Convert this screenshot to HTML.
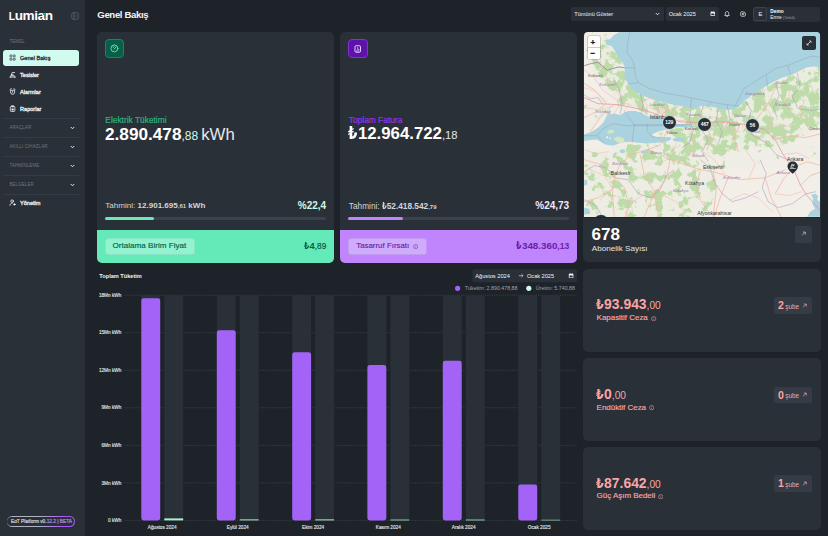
<!DOCTYPE html>
<html lang="tr">
<head>
<meta charset="utf-8">
<title>Genel Bakış</title>
<style>
*{box-sizing:border-box;margin:0;padding:0}
html,body{width:828px;height:536px;overflow:hidden;background:#1e2329;font-family:"Liberation Sans","DejaVu Sans",sans-serif;color:#f3f4f6}
.abs{position:absolute}
#side{position:absolute;left:0;top:0;width:85px;height:536px;background:#2a3038}
.nav{position:absolute;left:3px;width:76px;height:16px;border-radius:3px;font-size:5.6px;font-weight:400;-webkit-text-stroke:.28px currentColor;color:#f3f4f6;line-height:16px;padding-left:17px;white-space:nowrap}
.nav svg{position:absolute;left:6.400px;top:4.300px;width:7.200px;height:7.200px}
.nav.act{background:#d0fbee;color:#1f2937}
.sec{position:absolute;left:9.400px;font-size:4.500px;color:#6b7480;letter-spacing:.08px;font-weight:400;white-space:nowrap}
.div{position:absolute;left:3px;width:76px;height:1px;background:#353c45}
.chev{position:absolute;left:70px;width:5px;height:4px;margin-top:.5px}
.card{position:absolute;background:#2a3038;border-radius:5px;overflow:hidden}
.t{position:absolute;white-space:nowrap;line-height:1}
.mk{position:absolute;width:13.200px;height:13.200px;border-radius:50%;background:#2a3038;box-shadow:0 0 0 .7px rgba(190,215,235,.9);color:#fff;font-size:4.900px;font-weight:700;text-align:center;line-height:13.400px;letter-spacing:-.15px}
.l{display:inline-block;transform:scaleX(.8);transform-origin:0 50%;margin-right:-.135em}
</style>
</head>
<body>
<div id="side">
  <!-- logo -->
  <div class="t" id="logo" style="left:8.8px;top:9.2px;font-size:13.6px;font-weight:700;color:#fff;letter-spacing:-.45px"><span style="font-size:10.2px;letter-spacing:-.3px">L</span>umian</div>
  <div class="abs" style="left:42.6px;top:13.2px;width:2.4px;height:1.5px;background:#10b981"></div>
  <svg class="abs" style="left:71px;top:12px" width="8" height="8" viewBox="0 0 16 16" fill="none" stroke="#5b6470" stroke-width="1.6"><rect x="1.5" y="1.5" width="13" height="13" rx="3"/><path d="M6 1.5v13M10.5 6.5l-2 1.5 2 1.5" /></svg>

  <div class="sec" style="top:39.3px">TEMEL</div>
  <div class="nav act" style="top:49.6px"><svg viewBox="0 0 16 16" fill="none" stroke="#374151" stroke-width="1.900"><rect x="2.200" y="2.200" width="4.300" height="4.300" rx="1.200"/><rect x="9.500" y="2.200" width="4.300" height="4.300" rx="1.200"/><rect x="2.200" y="9.500" width="4.300" height="4.300" rx="1.200"/><rect x="9.500" y="9.500" width="4.300" height="4.300" rx="1.200"/></svg>Genel Bakış</div>
  <div class="nav" style="top:66.5px"><svg viewBox="0 0 16 16" fill="none" stroke="#f3f4f6" stroke-width="1.800" stroke-linecap="round" stroke-linejoin="round"><path d="M2 13.500h12.500M3.500 13.500L7 3.500h5.500M6 7.500c3.500 0 6 2 6.500 6M4.800 10.500h4"/></svg>Tesisler</div>
  <div class="nav" style="top:83.5px"><svg viewBox="0 0 16 16" fill="none" stroke="#f3f4f6" stroke-width="1.800" stroke-linecap="round" stroke-linejoin="round"><path d="M3.500 5h9v4.500a4.500 4.500 0 0 1-9 0zM2.500 3l2.500-1.500M13.500 3L11 1.500M8 7v2.500"/></svg>Alarmlar</div>
  <div class="nav" style="top:100.5px"><svg viewBox="0 0 16 16" fill="none" stroke="#f3f4f6" stroke-width="1.800" stroke-linejoin="round"><rect x="3" y="3" width="10" height="11.500" rx="2.200"/><path d="M6 1.800h4v2.400H6z"/><rect x="5.500" y="8" width="5" height="4" rx=".8" fill="#f3f4f6" stroke="none"/></svg>Raporlar</div>

  <div class="div" style="top:117.5px"></div>
  <div class="sec" style="top:125.3px">ARAÇLAR</div>
  <svg class="chev" style="top:125px" viewBox="0 0 10 8" fill="none" stroke="#e5e7eb" stroke-width="2"><path d="M1.500 2l3.500 3.500L8.500 2"/></svg>
  <div class="div" style="top:136.5px"></div>
  <div class="sec" style="top:144.3px">AKILLI CİHAZLAR</div>
  <svg class="chev" style="top:144px" viewBox="0 0 10 8" fill="none" stroke="#e5e7eb" stroke-width="2"><path d="M1.500 2l3.500 3.500L8.500 2"/></svg>
  <div class="div" style="top:155.5px"></div>
  <div class="sec" style="top:163.3px">TAHMİNLEME</div>
  <svg class="chev" style="top:163px" viewBox="0 0 10 8" fill="none" stroke="#e5e7eb" stroke-width="2"><path d="M1.500 2l3.500 3.500L8.500 2"/></svg>
  <div class="div" style="top:174.5px"></div>
  <div class="sec" style="top:182.3px">BELGELER</div>
  <svg class="chev" style="top:182px" viewBox="0 0 10 8" fill="none" stroke="#e5e7eb" stroke-width="2"><path d="M1.500 2l3.500 3.500L8.500 2"/></svg>
  <div class="div" style="top:193.500px"></div>
  <div class="nav" style="top:195px"><svg viewBox="0 0 16 16" fill="none" stroke="#f3f4f6" stroke-width="1.800" stroke-linecap="round"><circle cx="7" cy="4.800" r="2.900"/><path d="M2.200 14c0-3 2-5 5-5"/><circle cx="12" cy="12" r="1.600" fill="#f3f4f6"/></svg>Yönetim</div>

  <div class="abs" style="left:6.700px;top:516.100px;width:68.200px;height:10.600px;border-radius:5.300px;background:linear-gradient(90deg,#aeb4bd 0%,#aeb4bd 45%,#a855f7 85%)"></div>
  <div class="abs" style="left:7.400px;top:516.800px;width:66.800px;height:9.200px;border-radius:4.600px;background:#2a3038;font-size:4.800px;font-weight:400;-webkit-text-stroke:.2px currentColor;line-height:9.300px;padding-left:3.600px;white-space:nowrap;color:#d1d5db">EoT Platform v0.<span style="color:#a78bfa">12.2 | BETA</span></div>
</div>

<!-- header -->
<div class="t" style="left:97.300px;top:9.600px;font-size:9.600px;font-weight:700;color:#f3f4f6;letter-spacing:-.36px">Genel Bakış</div>


<!-- header controls -->
<div class="abs" style="left:571px;top:7.4px;width:93px;height:14px;background:#2a3038;border-radius:2px"></div>
<div class="t" style="left:574.3px;top:11.6px;font-size:5.6px;color:#f3f4f6">Tümünü Göster</div>
<svg class="abs" style="left:654.5px;top:12.3px" width="5" height="4" viewBox="0 0 10 8" fill="none" stroke="#e5e7eb" stroke-width="1.8"><path d="M1.5 2l3.500 3.500L8.500 2"/></svg>
<div class="abs" style="left:665.7px;top:7.4px;width:53.2px;height:14px;background:#2a3038;border-radius:2px"></div>
<div class="t" style="left:668.7px;top:11.6px;font-size:5.6px;color:#f3f4f6">Ocak 2025</div>
<svg class="abs" style="left:709.8px;top:11.4px" width="5.600" height="5.600" viewBox="0 0 16 16"><rect x="1.500" y="2.500" width="13" height="12" rx="2.500" fill="#f3f4f6"/><rect x="3.500" y="7" width="9" height="5.500" rx="1" fill="#2a3038"/><path d="M5 1v3M11 1v3" stroke="#f3f4f6" stroke-width="2"/></svg>
<svg class="abs" style="left:724.4px;top:11px" width="6" height="6.400" viewBox="0 0 16 17" fill="none" stroke="#f3f4f6" stroke-width="1.900"><path d="M8 1.500c-2.800 0-4.500 2-4.500 4.500v3L2 12h12l-1.500-3V6c0-2.500-1.700-4.500-4.500-4.500zM6 14.500c.5 1 3.500 1 4 0"/></svg>
<svg class="abs" style="left:739.7px;top:11.2px" width="6" height="6" viewBox="0 0 16 16" fill="none" stroke="#f3f4f6" stroke-width="1.900"><circle cx="8" cy="8" r="2.300"/><path d="M8 1.500l1.600 1.300 2.100-.3.800 1.900 1.900.900-.3 2.100L15.400 8l-1.300 1.600.3 2.100-1.900.8-.9 1.900-2.100-.3L8 15.400l-1.600-1.300-2.100.3-.8-1.900-1.900-.9.300-2.100L.6 8l1.300-1.600-.3-2.100 1.900-.8.900-1.900 2.100.3z"/></svg>
<div class="abs" style="left:753px;top:6.900px;width:67px;height:14.700px;background:#2a3038;border-radius:2.500px"></div>
<div class="abs" style="left:753.3px;top:7.200px;width:14px;height:14.100px;background:#2a3038;border:0.700px solid #3b434d;border-radius:2.500px"></div>
<div class="t" style="left:758.6px;top:11.500px;font-size:5.800px;color:#f3f4f6">E</div>
<div class="t" style="left:770.3px;top:9.600px;font-size:4.800px;font-weight:700;color:#fff">Demo</div>
<div class="t" style="left:770.3px;top:15.900px;font-size:4.800px;color:#f3f4f6">Emre <span style="font-size:3.600px;color:#9ca3af">(Yetkili)</span></div>

<!-- card 1 -->
<div class="card" style="left:97px;top:31.500px;width:237.200px;height:231px">
  <div class="abs" style="left:8.050px;top:7.300px;width:19.300px;height:19.300px;background:#065f46;border:0.700px solid #0f8a65;border-radius:4px"></div>
  <svg class="abs" style="left:13.400px;top:12.900px" width="8.800" height="8.800" viewBox="0 0 16 16" fill="none" stroke="#6ee7b7" stroke-width="1.600" stroke-linecap="round"><circle cx="8" cy="8" r="6.300"/><path d="M7.500 9.500l3.300-4M4.800 5.200l1 1M7.200 3.800l.3 1"/></svg>
  <div class="t" style="left:8.300px;top:84.600px;font-size:8.400px;-webkit-text-stroke:.2px #2fb07f;color:#2fb07f">Elektrik Tüketimi</div>
  <div class="t" style="left:8px;top:94px;font-size:17.200px;font-weight:700;color:#fff">2.890.478<span style="font-size:12px;font-weight:400;color:#d1fae5">,88</span><span style="font-weight:400;font-size:16.800px;color:#e5e7eb;margin-left:3px">kWh</span></div>
  <div class="t" style="left:8.300px;top:170.300px;font-size:8.050px;color:#d1d5db">Tahmini: <b>12.901.695<span style="font-size:6px">,61</span> kWh</b></div>
  <div class="t" style="right:8px;top:169px;font-size:10px;font-weight:700;color:#d1fae5">%22,4</div>
  <div class="abs" style="left:7.800px;top:185.400px;width:221px;height:3px;border-radius:1.500px;background:#3b424b"></div>
  <div class="abs" style="left:7.800px;top:185.400px;width:49.500px;height:3px;border-radius:1.500px;background:#6ee7b7"></div>
  <div class="abs" style="left:0;top:198.700px;width:100%;height:33px;background:#64eab8"></div>
  <div class="abs" style="left:8.300px;top:206.200px;width:89.800px;height:17.200px;border-radius:3.500px;background:#93f3d1;border:.6px dotted rgba(6,95,70,.18)"></div>
  <div class="t" style="left:15.500px;top:210.700px;font-size:8.100px;-webkit-text-stroke:.15px #065f46;color:#065f46">Ortalama Birim Fiyat</div>
  <div class="t lira" style="right:8px;top:209.800px;font-size:9.400px;font-weight:700;color:#065f46"><span class="l">₺</span>4<span style="font-size:8.200px;font-weight:400;-webkit-text-stroke:.2px #065f46">,89</span></div>
</div>

<!-- card 2 -->
<div class="card" style="left:340.200px;top:31.500px;width:237px;height:231px">
  <div class="abs" style="left:8.300px;top:7.500px;width:19.300px;height:19.300px;background:#5d12a9;border:0.700px solid #8530d6;border-radius:4px"></div>
  <svg class="abs" style="left:14.300px;top:13px" width="7.500" height="8" viewBox="0 0 15 16" fill="none" stroke="#e9d5ff" stroke-width="1.900"><rect x="2" y="1.500" width="11" height="13" rx="2.200"/><path d="M7.500 4.500v4.500h3M4 12h7" stroke-width="1.600"/></svg>
  <div class="t" style="left:8.600px;top:84.600px;font-size:8.400px;-webkit-text-stroke:.2px #9333ea;color:#9333ea">Toplam Fatura</div>
  <div class="t lira" style="left:8.300px;top:94.200px;font-size:16.800px;font-weight:700;color:#fff"><span class="l">₺</span>12.964.722<span style="font-size:11.200px;font-weight:400;color:#e5e7eb">,18</span></div>
  <div class="t lira" style="left:8.600px;top:170.300px;font-size:8.300px;color:#d1d5db">Tahmini: <b><span class="l">₺</span>52.418.542<span style="font-size:6px">,79</span></b></div>
  <div class="t" style="right:8px;top:169px;font-size:10px;font-weight:700;color:#f3e8ff">%24,73</div>
  <div class="abs" style="left:8.300px;top:185.400px;width:221px;height:3px;border-radius:1.500px;background:#3b424b"></div>
  <div class="abs" style="left:8.300px;top:185.400px;width:55px;height:3px;border-radius:1.500px;background:#c084fc"></div>
  <div class="abs" style="left:0;top:198.700px;width:100%;height:33px;background:#c084fc"></div>
  <div class="abs" style="left:8.300px;top:206.200px;width:78.500px;height:17.200px;border-radius:3.500px;background:#cfabfc;border:.6px dotted rgba(107,33,168,.22)"></div>
  <div class="t" style="left:16px;top:210.700px;font-size:7.900px;-webkit-text-stroke:.15px #6b21a8;color:#6b21a8">Tasarruf Fırsatı</div>
  <svg class="abs" style="left:73px;top:212.800px" width="5.200" height="5.200" viewBox="0 0 10 10" fill="none" stroke="#6b21a8" stroke-width="1"><circle cx="5" cy="5" r="4"/><path d="M5 4.500v2.500M5 2.800v.6"/></svg>
  <div class="t lira" style="right:8px;top:209.500px;font-size:9.800px;font-weight:700;color:#6b21a8"><span class="l">₺</span>348.360<span style="font-size:8.500px;font-weight:700">,13</span></div>
</div>

<!--MAPSTART--><!-- map -->
<div class="abs" style="left:583.3px;top:31.5px;width:237.4px;height:190px;background:#2a3038;border-radius:5px 5px 0 0"></div>
<svg class="abs" style="left:583.8px;top:32.3px;border-radius:4px 4px 0 0" width="236.6" height="184.600" viewBox="583.800 32.300 236.600 184.600" font-family="Liberation Sans, sans-serif">
<defs>
<filter id="forest" x="0" y="0" width="100%" height="100%" filterUnits="objectBoundingBox" color-interpolation-filters="sRGB">
  <feTurbulence type="fractalNoise" baseFrequency="0.11" numOctaves="5" seed="23" result="n"/>
  <feColorMatrix in="n" type="matrix" values="0 0 0 0 1  0 0 0 0 1  0 0 0 0 1  2.400 0 0 0 -1.000" result="na"/>
  <feGaussianBlur in="SourceGraphic" stdDeviation="3" result="d0"/>
  <feColorMatrix in="d0" type="matrix" values="0 0 0 0 1  0 0 0 0 1  0 0 0 0 1  0 0 0 1.500 0" result="d"/>
  <feComposite in="na" in2="d" operator="arithmetic" k1="0" k2="1" k3="1" k4="-1" result="c"/>
  <feComponentTransfer in="c" result="t"><feFuncA type="linear" slope="4" intercept="0"/></feComponentTransfer>
  <feFlood flood-color="#bedbaa" result="g"/>
  <feComposite in="g" in2="t" operator="in" result="f0"/>
  <feGaussianBlur in="f0" stdDeviation="0.350" result="f"/>
  <feColorMatrix in="d0" type="matrix" values="0 0 0 0 .80  0 0 0 0 .89  0 0 0 0 .72  0 0 0 .22 0" result="w"/>
  <feMerge><feMergeNode in="w"/><feMergeNode in="f"/></feMerge>
</filter>
</defs>
<rect x="583" y="32" width="238" height="186" fill="#f2efe9"/>
<!-- forest density -->
<g filter="url(#forest)">
<rect x="583" y="32" width="238" height="186" fill="#fff" fill-opacity="0.001"/>
<path d="M604 44l9 1 5 12 8 11-.5 10 7.500 11 8 6 6 3 18 5 9 2 30 3v12l-20 2-20-4-24-8-18-4-10-10-6-12-10-10-3-8-2-10z" fill="#fff" fill-opacity=".85"/>
<path d="M690 104l12 2 38 0 13-12 37-18 31-9v60l-21 10-25 12-25-3-20 5-15 8-15-8-20-10z" fill="#fff" fill-opacity=".76"/>
<path d="M750 92l40-18 31-9v40l-30 14-30 2-16-12z" fill="#fff" fill-opacity=".3"/>
<path d="M612 145l12-1 16 0 15-1 12 0 10 2 13 0 10 8-20 5-30 0-30-4z" fill="#fff" fill-opacity=".8"/>
<path d="M651 134l14-5 12-2 14 1 10 2 0 10-12 4-10-6-14-1-12 0z" fill="#fff" fill-opacity=".8"/>
<path d="M584 150l30 0 40 4 14 0 30 4 17 5 5 20-8 20-6 19H584z" fill="#fff" fill-opacity=".5"/>
<path d="M584 32h36l-14 9-8 20-14 4z" fill="#fff" fill-opacity=".3"/>
<path d="M584 100l20 0 20 10-20 12-20 10z" fill="#fff" fill-opacity=".3"/>
<path d="M720 150l40 0 30-5 31-5v20l-30 0-40 10-30 0z" fill="#fff" fill-opacity=".25"/>
</g>
<!-- water -->
<g fill="#aad3df">
<path d="M619.800 32L613.500 35.500 610.600 38.900 606 41.200 605.400 44.700 611.700 46.500 614.600 51.100 616.900 56.900 622.200 62.600 625 67.800 623.900 73.600 624.500 78.200 627.900 84 631.400 88.600 637.200 93.300 639.500 94 646.400 97.500 655.700 100.900 664 102.700 673.200 105 683.700 106.700 692.900 108.500 702.200 106.100 710.200 106.700 718.300 108.500 728.700 110.200 735.700 109 740.300 105.600 744 101 748.600 98 753.200 94 762.500 88.600 772.900 82.300 782.200 77.700 790.200 75.900 798.300 71.900 806.400 67.800 813.400 66.700 821 67.800V32z"/>
<path d="M583 135.200L590.900 132.200 597.900 128.100 603.100 122.900 605.400 118.300 607.100 114.800 614 113.700 619.800 115.400 623.900 113.100 627.900 111.300 634.900 111.300 640.600 113.100 645.300 115.400 648.700 117.100 652.200 115.400 655.700 114.200 660.300 117.100 664 118.300 668 120.500 672 123 677 124.200 685 124.500 692 125.500 692.600 127.200 688 127.700 680 127.100 676.800 127.300 671 129 664 130.300 659.400 131.600 655 133 652 134.600 653.600 136.800 658 137.500 664 137.400 670.500 137.500 671.200 139.500 668 141.200 664 142.200 659 142.800 655.700 143.100 647.600 143.700 638.300 143.100 630.200 142 623.900 142.600 618.700 143.700 612.900 146 607.100 145.400 601.300 142.600 596.700 139.700 590.900 140.200 583 141.400z"/>
<ellipse cx="678.300" cy="139.800" rx="5.800" ry="2.200"/>
<ellipse cx="622.300" cy="151.500" rx="2.700" ry="2"/>
<ellipse cx="644.500" cy="152.300" rx="3.900" ry="1.800"/>
<ellipse cx="693" cy="126.500" rx="1.800" ry=".8"/>
<path d="M811 195l4-1 3 2-1 4 4 3v14h-14l3-5 5-3-3-5 1-5z"/>
<path d="M584 180l3 0 0 5-3 1zM584 208l5 1 1 5-6 1z"/>
<path d="M657.500 101l.8 4-1.300 4 1 5" fill="none" stroke="#aad3df" stroke-width="1"/>
</g>
<!-- islands -->
<ellipse cx="610.500" cy="132" rx="3.600" ry="1.800" fill="#d5e6c6" transform="rotate(-12 610.500 132)"/>
<path d="M613 138.500l5-1.700 5 1.500 1.500 3-4 2.500-3.500-1.200z" fill="#d5e6c6"/>
<ellipse cx="607" cy="137.500" rx=".9" ry="1.300" fill="#f2efe9"/>
<ellipse cx="610" cy="138.500" rx=".9" ry=".8" fill="#f2efe9"/>
<!-- maritime boundaries -->
<g fill="none" stroke="#8e80a8" stroke-opacity=".6" stroke-width=".5">
<path d="M629.700 32L627.400 43.600 626.800 52.800 632.600 60.900 634.500 67.800 634.900 75.900 638.300 82.900 648.700 88.600 664 93.300 680 96 700 100 720 104 735 106 744 88.600 753.200 82.900 764.800 75.400 776.400 68.400 787.900 65.500 799.500 60.900 811.100 56.500 821 57.400"/>
<path d="M625 68.100h9.500M628 84l10-1M691 98l-.5 10M711 102l-5 6M727 105l.5 5M734 106l5 0M766 75l1.500 12M787.500 66l3 9.500"/>
<path d="M583 136h14l8 9M597 136l6-7 10-5 12 2h60M624 112l10 13-2 18M647 125l0 7 5 5 8 1M633 125h58"/>
</g>
<!-- admin borders -->
<g fill="none" stroke="#a995b8" stroke-opacity=".8" stroke-width=".65">
<path d="M584 66l7-2.200 7-1.200 4.500 4 4.600 4 4.600-1.600 7-1.700 6.300.8" stroke="#94839f" stroke-width=".85" stroke-opacity="1"/>
<path d="M584 95l6 4 8-1 4 6M613 78l6 12 3 14-2 10M640 94l3 12-2 8M691 108l-2 12 4 10-3 12-8 6M703 106l-3 10 5 14M718 108l-2 14 6 10-4 12M728 110l2 10-6 8M745 101l6 10-4 14 5 10M775 82l4 14-6 12 4 10M797 73l3 14-8 10 6 12 14 2 9-2"/>
<path d="M584 172l10-6 12 2 8 10 14 2 10 14 12 4 10-8 6-14 8-6M700 160l10 8 4 14 8 12 10 8 14-4 12-6M760 160l6 14-4 14 6 14 10 6 14-4 14-10 10-2M752 135l14 8 10 12 14 6M700 128l8 12-6 12 6 10M584 200l12 6 6 11"/>
</g>
<!-- roads -->
<g fill="none" stroke="#f5b3a6" stroke-width=".75" stroke-linecap="round" stroke-linejoin="round">
<path d="M584 98l14 6 20 1 20 4 14 4 8 3 6 2 14 4 20 1 20-1 20 2 12 2 13 4 10 10 8 15 7 10 3 3 7 17 6 10 9 10 6 7" stroke="#ee8f99" stroke-width=".75"/>
<path d="M668 129l-8 16-12 5-18 5-10 10-5 10-3 15 2 27M648 150l22 10 30 10 13 2 27 8 25-2 20-8M700 172l-4 13 4 15 10 15M713 172l3 18-3 27M793 168l-10 12-8 14M793 168l14-6 14 4M752 126l10-14 8-12 6-14M705 124l6 14-4 12M584 118l12-6 10-8M590 132l10-14 12-12M584 160l14 4 16 10M612 190l-14 8-14 4M614 176l10 12 4 14-2 15M640 155l4 20 10 16 4 26M670 160l-4 20-12 14-10 23M728 178l-8 20-6 19M765 178l6 20 10 19M584 84l10 6 12 14M660 117l6-6 10-2M740 124l-6 14 4 14M775 140l16-4 14 2 16-4M800 186l10-10 11-4"/>
</g>
<g fill="none" stroke="#f6bcb0" stroke-width=".6" stroke-linecap="round">
<path d="M584 70l10 8 8 12 14 10 16 6M584 88l12 4 10 10M600 60l4 14 10 14 10 12M620 104l-6 10-10 8M628 104l-4 8M584 108l16 2 14-4M596 120l10-10M640 108l6-8 10-4M645 104l10 6 8 0M650 108l10 4 6-2M655 104l3 8 6 4M660 108l8 2 8 6M668 118l10 3 12-1M648 112l8 2 8-1"/>
<path d="M700 123l10-6 12 2M720 122l8 8 12 2M690 128l4 14-6 14M676 143l-4 12-10 8M700 150l14 10 10 14M584 150l12 4 12-2M590 170l14 6 8 12M600 200l10-10M625 217l6-14 12-8M650 200l14-4 12 6 10 14M740 124l10 12 14 6M765 130l14-6 14 4M783 155l14-2 12 6M760 100l10 14-2 12M790 90l-4 14 8 12M805 100l-6 14 10 16M745 150l10 14-6 14M730 200l14-6 14 4 14 14M775 194l14 2 12-4"/>
</g>
<!-- labels -->
<g font-size="4.600" fill="#555">
<text x="587.700" y="77.500" font-size="3.800">Kırklareli</text>
<text x="649.500" y="119.600" font-size="5.600" fill="#3a3a3a">İstanbul</text>
<text x="684.500" y="130" font-size="4.200">Kocaeli</text>
<text x="666" y="134.700" font-size="3.800">Yalova</text>
<text x="729" y="126.300" font-size="3.800">Düzce</text>
<text x="610.500" y="175" font-size="5.200" fill="#3a3a3a">Balıkesir</text>
<text x="702.700" y="169" font-size="5.200" fill="#3a3a3a">Eskişehir</text>
<text x="684.800" y="185.300" font-size="5.200" fill="#3a3a3a">Kütahya</text>
<text x="697" y="215.200" font-size="5.200" fill="#3a3a3a">Afyonkarahisar</text>
<text x="786.800" y="161.500" font-size="5.200" fill="#3a3a3a">Ankara</text>
<text x="808.500" y="130.800" font-size="4.200">Çankırı</text>
</g>
<g font-size="4.200" fill="#9a78a6" font-style="italic">
<text x="599" y="86.500">Kırklareli</text>
<text x="594.500" y="113.300">Tekirdağ</text>
<text x="649.500" y="106">İstanbul</text>
<text x="686" y="116.800">Kocaeli</text>
<text x="734" y="117.500">Düzce</text>
<text x="751" y="133.800">Bolu</text>
<text x="745" y="95.800">Zonguldak</text>
<text x="775.800" y="84.200">Bartın</text>
<text x="775" y="106">Karabük</text>
<text x="650.500" y="154">Bursa</text>
<text x="692" y="157.500">Bilecik</text>
<text x="612" y="165">Balıkesir</text>
<text x="723" y="179.500">Eskişehir</text>
<text x="672.700" y="192.200">Kütahya</text>
<text x="776.400" y="174.500">Ankara</text>
</g>
</svg>
<!-- map controls & markers -->
<div class="abs" style="left:588px;top:35.700px;width:11.700px;height:23.500px;background:#fff;border-radius:1.500px;box-shadow:0 0 0 .6px rgba(0,0,0,.25)"></div>
<div class="abs" style="left:588px;top:47.300px;width:11.700px;height:.5px;background:#ccc"></div>
<div class="t" style="left:590.600px;top:39.300px;font-size:8px;font-weight:700;-webkit-text-stroke:.3px #222;color:#222">+</div>
<div class="t" style="left:590.600px;top:49.900px;font-size:8px;font-weight:700;-webkit-text-stroke:.3px #222;color:#222">−</div>
<div class="abs" style="left:802px;top:36px;width:13.500px;height:13.900px;background:#2a3038;border-radius:2px"></div>
<svg class="abs" style="left:805.700px;top:39.900px" width="6" height="6" viewBox="0 0 12 12" fill="none" stroke="#f3f4f6" stroke-width="1.400"><path d="M2.500 9.500l7-7M6.500 2h3.500v3.500M5.500 10H2V6.500"/></svg>
<div class="mk" style="left:662.600px;top:115.700px">129</div>
<div class="mk" style="left:698.100px;top:117.700px">467</div>
<div class="mk" style="left:745.800px;top:119.100px">56</div>
<svg class="abs" style="left:786.900px;top:161.100px" width="11.400" height="13" viewBox="0 0 22.800 26"><path d="M11.400 25.500C6 20 1 16.500 1 10.800 1 5 5.600.8 11.400.8s10.400 4.200 10.400 10c0 5.700-5 9.200-10.400 14.700z" fill="#272d35"/><path d="M5.500 15h12M7 12.500h6M8 12.500l1.500-6h2.500l1.500 4M9 9.500l7-2" stroke="#f3f4f6" stroke-width="1.300" fill="none"/></svg>
<div class="mk" style="left:594.400px;top:214.800px;clip-path:inset(0 0 11.100px 0)"></div>
<!--MAPEND-->
<!-- chart -->
<svg class="abs" style="left:0;top:262px" width="585" height="274" viewBox="0 262 585 274" font-family="Liberation Sans, sans-serif">
<line x1="124.500" y1="295.20" x2="577" y2="295.20" stroke="#4a525c" stroke-width="0.600" stroke-dasharray="1.100 1.100"/>
<text x="121.300" y="296.90" font-size="4.700" fill="#e5e7eb" stroke="#e5e7eb" stroke-width=".12" text-anchor="end">18Mn kWh</text>
<line x1="124.500" y1="332.73" x2="577" y2="332.73" stroke="#4a525c" stroke-width="0.600" stroke-dasharray="1.100 1.100"/>
<text x="121.300" y="334.43" font-size="4.700" fill="#e5e7eb" stroke="#e5e7eb" stroke-width=".12" text-anchor="end">15Mn kWh</text>
<line x1="124.500" y1="370.26" x2="577" y2="370.26" stroke="#4a525c" stroke-width="0.600" stroke-dasharray="1.100 1.100"/>
<text x="121.300" y="371.96" font-size="4.700" fill="#e5e7eb" stroke="#e5e7eb" stroke-width=".12" text-anchor="end">12Mn kWh</text>
<line x1="124.500" y1="407.79" x2="577" y2="407.79" stroke="#4a525c" stroke-width="0.600" stroke-dasharray="1.100 1.100"/>
<text x="121.300" y="409.49" font-size="4.700" fill="#e5e7eb" stroke="#e5e7eb" stroke-width=".12" text-anchor="end">9Mn kWh</text>
<line x1="124.500" y1="445.32" x2="577" y2="445.32" stroke="#4a525c" stroke-width="0.600" stroke-dasharray="1.100 1.100"/>
<text x="121.300" y="447.02" font-size="4.700" fill="#e5e7eb" stroke="#e5e7eb" stroke-width=".12" text-anchor="end">6Mn kWh</text>
<line x1="124.500" y1="482.85" x2="577" y2="482.85" stroke="#4a525c" stroke-width="0.600" stroke-dasharray="1.100 1.100"/>
<text x="121.300" y="484.55" font-size="4.700" fill="#e5e7eb" stroke="#e5e7eb" stroke-width=".12" text-anchor="end">3Mn kWh</text>
<line x1="124.500" y1="520.38" x2="577" y2="520.38" stroke="#4a525c" stroke-width="0.600" stroke-dasharray="1.100 1.100"/>
<text x="121.300" y="522.08" font-size="4.700" fill="#e5e7eb" stroke="#e5e7eb" stroke-width=".12" text-anchor="end">0 kWh</text>
<rect x="141.3" y="295.2" width="18.900" height="225.20" rx="1.500" fill="#2a3038"/>
<rect x="164.3" y="295.2" width="18.900" height="225.20" rx="1.500" fill="#2a3038"/>
<rect x="141.3" y="298.2" width="18.900" height="222.20" rx="2.400" fill="#a463f7"/>
<rect x="164.3" y="518.40" width="18.900" height="2.0" fill="#a7f3d0"/>
<text x="162.2" y="528.900" font-size="4.700" fill="#e5e7eb" stroke="#e5e7eb" stroke-width=".12" text-anchor="middle">Ağustos 2024</text>
<rect x="216.8" y="295.2" width="18.900" height="225.20" rx="1.500" fill="#2a3038"/>
<rect x="239.8" y="295.2" width="18.900" height="225.20" rx="1.500" fill="#2a3038"/>
<rect x="216.8" y="330.2" width="18.900" height="190.20" rx="2.400" fill="#a463f7"/>
<rect x="239.8" y="519.40" width="18.900" height="1.0" fill="#a7f3d0"/>
<text x="237.7" y="528.900" font-size="4.700" fill="#e5e7eb" stroke="#e5e7eb" stroke-width=".12" text-anchor="middle">Eylül 2024</text>
<rect x="292.2" y="295.2" width="18.900" height="225.20" rx="1.500" fill="#2a3038"/>
<rect x="315.2" y="295.2" width="18.900" height="225.20" rx="1.500" fill="#2a3038"/>
<rect x="292.2" y="352.3" width="18.900" height="168.10" rx="2.400" fill="#a463f7"/>
<rect x="315.2" y="519.40" width="18.900" height="1.0" fill="#a7f3d0"/>
<text x="313.1" y="528.900" font-size="4.700" fill="#e5e7eb" stroke="#e5e7eb" stroke-width=".12" text-anchor="middle">Ekim 2024</text>
<rect x="367.4" y="295.2" width="18.900" height="225.20" rx="1.500" fill="#2a3038"/>
<rect x="390.4" y="295.2" width="18.900" height="225.20" rx="1.500" fill="#2a3038"/>
<rect x="367.4" y="365.0" width="18.900" height="155.40" rx="2.400" fill="#a463f7"/>
<rect x="390.4" y="519.60" width="18.900" height="0.8" fill="#a7f3d0"/>
<text x="388.3" y="528.900" font-size="4.700" fill="#e5e7eb" stroke="#e5e7eb" stroke-width=".12" text-anchor="middle">Kasım 2024</text>
<rect x="442.8" y="295.2" width="18.900" height="225.20" rx="1.500" fill="#2a3038"/>
<rect x="465.8" y="295.2" width="18.900" height="225.20" rx="1.500" fill="#2a3038"/>
<rect x="442.8" y="360.7" width="18.900" height="159.70" rx="2.400" fill="#a463f7"/>
<rect x="465.8" y="519.60" width="18.900" height="0.8" fill="#a7f3d0"/>
<text x="463.7" y="528.900" font-size="4.700" fill="#e5e7eb" stroke="#e5e7eb" stroke-width=".12" text-anchor="middle">Aralık 2024</text>
<rect x="518.3" y="295.2" width="18.900" height="225.20" rx="1.500" fill="#2a3038"/>
<rect x="541.3" y="295.2" width="18.900" height="225.20" rx="1.500" fill="#2a3038"/>
<rect x="518.3" y="484.4" width="18.900" height="36.00" rx="2.400" fill="#a463f7"/>
<rect x="541.3" y="519.80" width="18.900" height="0.6" fill="#a7f3d0"/>
<text x="539.2" y="528.900" font-size="4.700" fill="#e5e7eb" stroke="#e5e7eb" stroke-width=".12" text-anchor="middle">Ocak 2025</text>
<text x="99.300" y="278" font-size="5.600" font-weight="700" fill="#f3f4f6">Toplam Tüketim</text>
<rect x="472.400" y="269.200" width="104.700" height="13" rx="2" fill="#2a3038"/>
<text x="475.300" y="277.700" font-size="5.650" fill="#f3f4f6">Ağustos 2024</text>
<text x="527" y="277.700" font-size="5.600" fill="#f3f4f6">Ocak 2025</text>
<path d="M518.800 275.700h4.200M521.300 274l1.700 1.700-1.700 1.700" stroke="#e5e7eb" stroke-width="0.600" fill="none"/>
<g transform="translate(568.300 272.900)"><rect x="0.500" y="0.900" width="4.600" height="4.300" rx="0.900" fill="#f3f4f6"/><rect x="1.200" y="2.500" width="3.200" height="2" rx="0.400" fill="#2a3038"/><path d="M1.700 0.300v1.200M3.900 0.300v1.200" stroke="#f3f4f6" stroke-width="0.700"/></g>
<circle cx="457.600" cy="288.300" r="2.600" fill="#a463f7"/>
<text x="464.800" y="289.900" font-size="5.300" fill="#9ca3af">Tüketim: 2.890.478,88</text>
<circle cx="528.800" cy="288.300" r="2.600" fill="#ccfbf1"/>
<text x="535.800" y="289.900" font-size="5.300" fill="#9ca3af">Üretim: 5.740,88</text>
</svg>

<!-- right -->
<div class="abs" style="left:583.300px;top:216.900px;width:237.400px;height:45.600px;background:#2a3038;border-top:1.500px solid #20252b;border-radius:0 0 5px 5px"></div>
<div class="t" style="left:591.600px;top:225.700px;font-size:17px;font-weight:700;color:#fff">678</div>
<div class="t" style="left:591.800px;top:245px;font-size:8.100px;color:#e5e7eb">Abonelik Sayısı</div>
<div class="abs" style="left:795.300px;top:225.500px;width:17px;height:17px;background:#353c45;border-radius:2.500px"></div>
<svg class="abs" style="left:801.100px;top:231.300px" width="5.400" height="5.400" viewBox="0 0 10 10" fill="none" stroke="#d1d5db" stroke-width="1.200"><path d="M2 8L8 2M3.500 2H8v4.500"/></svg>
<div class="card" style="left:583.300px;top:268.9px;width:237.400px;height:83px">
<div class="t lira" style="left:13px;top:29.500px;font-size:13.900px;font-weight:700;color:#fca5a5"><span class="l">₺</span>93.943<span style="font-size:10.200px;font-weight:400">,00</span></div>
<div class="t" style="left:13.300px;top:45.400px;font-size:7.950px;-webkit-text-stroke:.15px #fca5a5;color:#fca5a5">Kapasitif Ceza</div>
<svg class="abs" style="left:68px;top:47px" width="5.400" height="5.400" viewBox="0 0 10 10" fill="none" stroke="#fca5a5" stroke-width="1"><circle cx="5" cy="5" r="4"/><path d="M5 4.500v2.500M5 2.800v.6"/></svg>
<div class="abs" style="right:8.300px;top:28.400px;width:38px;height:16.500px;background:#353c45;border-radius:2.500px"></div>
<div class="t" style="right:21.800px;top:31.300px;font-size:10.500px;font-weight:700;color:#fca5a5">2 <span style="font-size:6.300px;font-weight:400;position:relative;top:-0.600px;margin-left:-1.500px">şube</span></div>
<svg class="abs" style="right:13.200px;top:34.200px" width="5.300" height="5.300" viewBox="0 0 10 10" fill="none" stroke="#fca5a5" stroke-width="1.300"><path d="M2 8L8 2M3.500 2H8v4.500"/></svg>
</div>
<div class="card" style="left:583.300px;top:358.3px;width:237.400px;height:83px">
<div class="t lira" style="left:13px;top:29.500px;font-size:13.900px;font-weight:700;color:#fca5a5"><span class="l">₺</span>0<span style="font-size:10.200px;font-weight:400">,00</span></div>
<div class="t" style="left:13.300px;top:45.400px;font-size:7.950px;-webkit-text-stroke:.15px #fca5a5;color:#fca5a5">Endüktif Ceza</div>
<svg class="abs" style="left:65.300px;top:47px" width="5.400" height="5.400" viewBox="0 0 10 10" fill="none" stroke="#fca5a5" stroke-width="1"><circle cx="5" cy="5" r="4"/><path d="M5 4.500v2.500M5 2.800v.6"/></svg>
<div class="abs" style="right:8.300px;top:28.400px;width:38px;height:16.500px;background:#353c45;border-radius:2.500px"></div>
<div class="t" style="right:21.800px;top:31.300px;font-size:10.500px;font-weight:700;color:#fca5a5">0 <span style="font-size:6.300px;font-weight:400;position:relative;top:-0.600px;margin-left:-1.500px">şube</span></div>
<svg class="abs" style="right:13.200px;top:34.200px" width="5.300" height="5.300" viewBox="0 0 10 10" fill="none" stroke="#fca5a5" stroke-width="1.300"><path d="M2 8L8 2M3.500 2H8v4.500"/></svg>
</div>
<div class="card" style="left:583.300px;top:447.1px;width:237.400px;height:83px">
<div class="t lira" style="left:13px;top:29.500px;font-size:13.900px;font-weight:700;color:#fca5a5"><span class="l">₺</span>87.642<span style="font-size:10.200px;font-weight:400">,00</span></div>
<div class="t" style="left:13.300px;top:45.400px;font-size:7.950px;-webkit-text-stroke:.15px #fca5a5;color:#fca5a5">Güç Aşım Bedeli</div>
<svg class="abs" style="left:74.700px;top:47px" width="5.400" height="5.400" viewBox="0 0 10 10" fill="none" stroke="#fca5a5" stroke-width="1"><circle cx="5" cy="5" r="4"/><path d="M5 4.500v2.500M5 2.800v.6"/></svg>
<div class="abs" style="right:8.300px;top:28.400px;width:38px;height:16.500px;background:#353c45;border-radius:2.500px"></div>
<div class="t" style="right:21.800px;top:31.300px;font-size:10.500px;font-weight:700;color:#fca5a5">1 <span style="font-size:6.300px;font-weight:400;position:relative;top:-0.600px;margin-left:-1.500px">şube</span></div>
<svg class="abs" style="right:13.200px;top:34.200px" width="5.300" height="5.300" viewBox="0 0 10 10" fill="none" stroke="#fca5a5" stroke-width="1.300"><path d="M2 8L8 2M3.500 2H8v4.500"/></svg>
</div>

</body>
</html>
